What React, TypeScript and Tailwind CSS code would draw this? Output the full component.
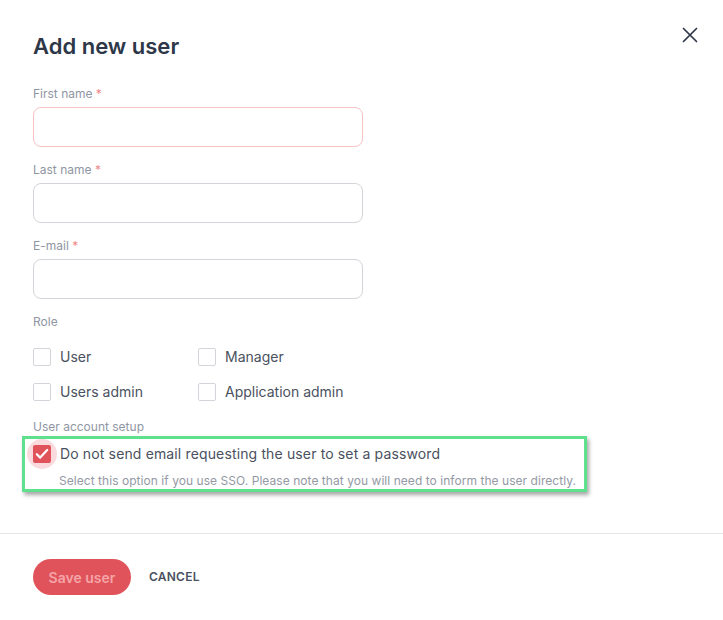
import React from 'react';

const font = { fontFamily: 'Inter, "Noto Sans", sans-serif' };

interface FieldProps {
  label: string;
  highlighted?: boolean;
}

const Field: React.FC<FieldProps> = ({ label, highlighted }) => {
  return (
    <div className="mb-[15px]">
      <label className="block text-[12px] leading-[16px] text-[#8f96a3]">
        {label} <span className="text-[#f08a8a]">*</span>
      </label>
      <input
        type="text"
        className={
          'mt-[5px] block h-[40px] w-[330px] rounded-[8px] border bg-white px-3 text-sm outline-none ' +
          (highlighted ? 'border-[#f6c3c3]' : 'border-[#d3d5da]')
        }
      />
    </div>
  );
};

const RoleCheckbox: React.FC<{ label: string }> = ({ label }) => {
  return (
    <label className="flex h-[20px] items-center gap-[9px] text-[14px] leading-[20px] text-[#4a5160]">
      <span className="block h-[18px] w-[18px] rounded-[2px] border border-[#d3d5da] bg-white" />
      {label}
    </label>
  );
};

export default function App() {
  return (
    <div className="relative h-[620px] w-[723px] overflow-hidden bg-white" style={font}>
      <button className="absolute right-[25px] top-[27px] text-[#2d3748]" aria-label="Close">
        <svg width="16" height="16" viewBox="0 0 16 16" fill="none" stroke="currentColor" strokeWidth="1.7" strokeLinecap="round">
          <path d="M1.5 1.5 L14.5 14.5 M14.5 1.5 L1.5 14.5" />
        </svg>
      </button>

      <div className="pl-[33px] pt-[32px]">
        <h2 className="text-[22px] font-semibold leading-[28px] text-[#2d3748]">Add new user</h2>

        <div className="mt-[26px]">
          <Field label="First name" highlighted />
          <Field label="Last name" />
          <Field label="E-mail" />
        </div>

        <div className="text-[12px] leading-[16px] text-[#8f96a3]">Role</div>
        <div className="mt-[17px] grid w-[330px] grid-cols-[165px_165px] gap-y-[15px]">
          <RoleCheckbox label="User" />
          <RoleCheckbox label="Manager" />
          <RoleCheckbox label="Users admin" />
          <RoleCheckbox label="Application admin" />
        </div>

        <div className="mt-[17px] text-[12px] leading-[16px] text-[#8f96a3]">User account setup</div>

        <div className="-ml-[11px] mt-[1px] w-[565px] border-[3px] border-[#5ee08f] bg-white pb-0 pl-[8px] pt-[5px] shadow-[2px_3px_4px_rgba(0,0,0,0.35)]">
          <div className="flex h-[20px] items-center gap-[9px] text-[14px] leading-[20px] tracking-[0.01em] text-[#4a5160]">
            <span className="relative flex h-[18px] w-[18px] items-center justify-center">
              <span className="absolute -left-[6px] -top-[6px] h-[30px] w-[30px] rounded-full bg-[#fadadd]" />
              <span className="relative flex h-[18px] w-[18px] items-center justify-center rounded-[2px] bg-[#e0535a]">
                <svg width="16" height="16" viewBox="0 0 16 16" fill="none" stroke="white" strokeWidth="2.2" strokeLinecap="round" strokeLinejoin="round">
                  <path d="M2.8 8.2 L6.2 11.6 L13.2 4" />
                </svg>
              </span>
            </span>
            Do not send email requesting the user to set a password
          </div>
          <div className="mt-[9px] pl-[26px] text-[12px] leading-[16px] tracking-[0.004em] text-[#9499a4]">
            Select this option if you use SSO. Please note that you will need to inform the user directly.
          </div>
        </div>
      </div>

      <div className="mt-[41px] border-t border-[#e6e7ea]" />

      <div className="flex items-center gap-[18px] pl-[33px] pt-[25px]">
        <button className="h-[36px] w-[98px] rounded-full bg-[#e0535a] text-[14px] font-semibold text-[#f5a4a8]">
          Save user
        </button>
        <button className="text-[12px] font-semibold tracking-[0.02em] text-[#4a5160]">CANCEL</button>
      </div>
    </div>
  );
}
